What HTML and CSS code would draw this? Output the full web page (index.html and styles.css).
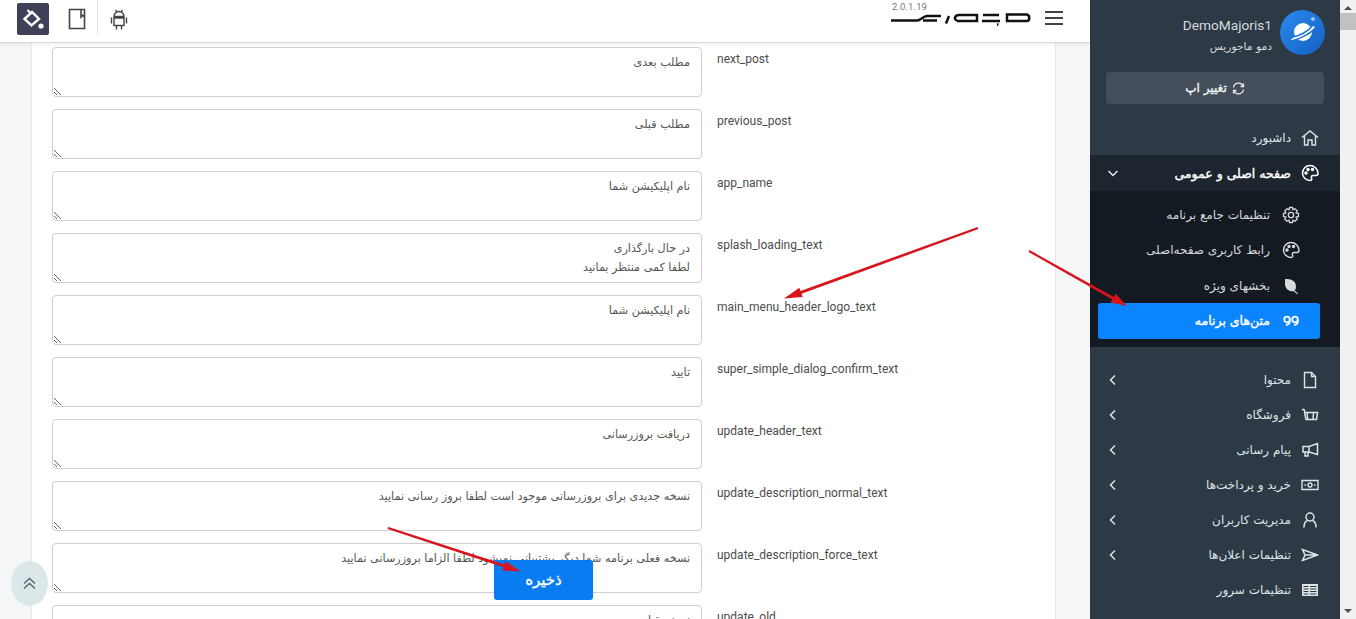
FILE: index.html
```html
<!DOCTYPE html>
<html lang="fa">
<head>
    <meta charset="UTF-8">
    <title>DemoMajoris1</title>
    <link rel="stylesheet" href="styles.css">
</head>
<body>
<div class="shell">
    <div class="main">
        <div class="topbar">
            <div class="tools">
                <a class="tool-paint" href="#">
                    <svg width="26" height="26" viewBox="0 0 26 26" fill="none" stroke="#fff"><path d="M4.500 13 12 6l7 7-7.500 6.500z" stroke-width="2.400"/><path d="M7.500 4 11 7.500" stroke-width="2.200"/><circle cx="21" cy="20" r="2.600" fill="#fff" stroke="none"/></svg>
                </a>
                <a class="tool-book" href="#">
                    <svg width="18" height="22" viewBox="0 0 18 22" fill="none" stroke="#444" stroke-width="1.600"><path d="M1.500 1.500h15v19h-15z"/><path d="M13 1.500v7.500l1.800-1.800 1.700 1.800"/></svg>
                </a>
                <span class="tool-sep"></span>
                <a class="tool-android" href="#">
                    <svg width="18" height="21" viewBox="0 0 18 21" fill="none" stroke="#444" stroke-width="1.400"><path d="M4 7.500a5 5 0 0 1 10 0zM4 9h10v7.500H4z"/><path d="M1.500 8.500v6M16.500 8.500v6M6.500 16.500v4M11.500 16.500v4M5.500 1l1.500 2M12.500 1 11 3"/></svg>
                </a>
            </div>
            <div class="brand">
                <div class="brand-mark">
                    <span class="version">2.0.1.19</span>
                    <svg width="141" height="15" viewBox="0 0 141 15" fill="none" stroke="#111" stroke-width="2.500"><path d="M1 9.500h26c4 0 6-4.500 10-4.500h14M33 9.500h14M56 12.500l3-7.500M67 9.500c-3-.5-3-5.500 2-5.500h18v6H67M93 4h16M92 10h18M107 13.500h1.500M117 3.500h20c3 1 3 6 0 6.500h-20z"/></svg>
                </div>
                <div class="burger"><span></span><span></span><span></span></div>
            </div>
        </div>
        <div class="content">
            <div class="card">
                <div class="row"><textarea dir="rtl">مطلب بعدی</textarea><label>next_post</label></div>
                <div class="row"><textarea dir="rtl">مطلب قبلی</textarea><label>previous_post</label></div>
                <div class="row"><textarea dir="rtl">نام اپلیکیشن شما</textarea><label>app_name</label></div>
                <div class="row"><textarea dir="rtl">در حال بارگذاری
لطفا کمی منتظر بمانید</textarea><label>splash_loading_text</label></div>
                <div class="row"><textarea dir="rtl">نام اپلیکیشن شما</textarea><label>main_menu_header_logo_text</label></div>
                <div class="row"><textarea dir="rtl">تایید</textarea><label>super_simple_dialog_confirm_text</label></div>
                <div class="row"><textarea dir="rtl">دریافت بروزرسانی</textarea><label>update_header_text</label></div>
                <div class="row"><textarea dir="rtl">نسخه جدیدی برای بروزرسانی موجود است لطفا بروز رسانی نمایید</textarea><label>update_description_normal_text</label></div>
                <div class="row"><textarea dir="rtl">نسخه فعلی برنامه شما دیگر پشتیبانی نمیشود لطفا الزاما بروزرسانی نمایید</textarea><label>update_description_force_text</label></div>
                <div class="row"><textarea dir="rtl">نسخه قبلی</textarea><label>update_old</label></div>
            </div>
        </div>
    </div>

    <div class="sidebar" dir="rtl">
        <div class="account">
            <div class="avatar">
                <svg width="45" height="45" viewBox="0 0 45 45"><circle cx="23" cy="22" r="9" fill="#fff"/><path d="M8 31c8 0 23-7 28-14l-3-2c-5 7-14 11-20 12z" fill="#fff" stroke="#1c74d8" stroke-width="1.500"/><circle cx="33" cy="9" r="2" fill="#9fc8f5"/></svg>
            </div>
            <div class="account-text">
                <div class="account-name">DemoMajoris1</div>
                <div class="account-sub">دمو ماجوریس</div>
            </div>
        </div>
        <a class="switch-app" href="#">
            <svg width="13" height="13" viewBox="0 0 13 13" fill="none" stroke="#e5e7ea" stroke-width="1.300"><path d="M1.500 5.500A5 5 0 0 1 11 4M11.500 7.500A5 5 0 0 1 2 9"/><path d="M11.500 1.500V4.500H8.500M1.500 11.500V8.500H4.500"/></svg>
            تغییر اپ
        </a>
        <nav class="menu">
            <a class="item" href="#">
                <svg class="ico" viewBox="0 0 18 18" fill="none" stroke="#dfe3e6" stroke-width="1.400"><path d="M1 8.500 9 2l8 6.500M3.500 7v9h3.500v-5h4v5h3.500V7"/></svg>
                <span>داشبورد</span>
            </a>
            <a class="item item-open" href="#">
                <svg class="ico" viewBox="0 0 18 18" fill="none" stroke="#fff" stroke-width="1.500"><path d="M9 1.500a7.500 7.500 0 0 0 0 15c2 0 2-1.500 1.500-2.500s0-2.500 1.500-2.500h3c1.500 0 2-1 2-2.500 0-4-4-7.500-8-7.500z"/><circle cx="5" cy="9" r="1" fill="#fff"/><circle cx="7" cy="5.500" r="1" fill="#fff"/><circle cx="11.500" cy="5.500" r="1" fill="#fff"/></svg>
                <span>صفحه اصلی و عمومی</span>
                <svg class="chev" viewBox="0 0 12 12" fill="none" stroke="#e5e7ea" stroke-width="1.500"><path d="M1.500 4 6 8.500 10.500 4"/></svg>
            </a>
            <div class="submenu">
                <a class="subitem" href="#">
                    <svg class="ico" viewBox="0 0 18 18" fill="none" stroke="#d5d9dc" stroke-width="1.300"><path d="M7.500 1.500h3l.5 2.200 2-1 2.200 2.200-1.100 2 2.400.6v3l-2.400.6 1.100 2-2.200 2.200-2-1.100-.5 2.300h-3l-.5-2.300-2 1.100-2.200-2.200 1.100-2-2.400-.6v-3l2.400-.6-1.100-2L5 2.700l2 1z"/><circle cx="9" cy="9" r="2.700"/></svg>
                    <span>تنظیمات جامع برنامه</span>
                </a>
                <a class="subitem" href="#">
                    <svg class="ico" viewBox="0 0 18 18" fill="none" stroke="#d5d9dc" stroke-width="1.400"><path d="M9 1.500a7.500 7.500 0 0 0 0 15c2 0 2-1.500 1.500-2.500s0-2.500 1.500-2.500h3c1.500 0 2-1 2-2.500 0-4-4-7.500-8-7.500z"/><circle cx="5" cy="9" r="1" fill="#d5d9dc"/><circle cx="7" cy="5.500" r="1" fill="#d5d9dc"/><circle cx="11.500" cy="5.500" r="1" fill="#d5d9dc"/></svg>
                    <span>رابط کاربری صفحه‌اصلی</span>
                </a>
                <a class="subitem" href="#">
                    <svg class="ico" viewBox="0 0 18 18" fill="#d5d9dc"><path d="M3 2c6 0 11 1 11 8 0 2-1 3-2 4-4 1-8-1-9-6zM12 13l4 3.500-.8.800-4-3.500z"/></svg>
                    <span>بخشهای ویژه</span>
                </a>
                <a class="subitem subitem-on" href="#">
                    <svg class="ico" viewBox="0 0 18 18" fill="none" stroke="#fff" stroke-width="1.800"><circle cx="5" cy="7.500" r="2.800"/><path d="M7.800 7.500v2c0 2-1 3-3.800 3.500"/><circle cx="13" cy="7.500" r="2.800"/><path d="M15.800 7.500v2c0 2-1 3-3.800 3.500"/></svg>
                    <span>متن‌های برنامه</span>
                </a>
            </div>
            <a class="item" href="#">
                <svg class="ico" viewBox="0 0 18 18" fill="none" stroke="#dfe3e6" stroke-width="1.400"><path d="M3.500 1.500h7l4 4v11h-11zM10.500 1.500v4h4"/></svg>
                <span>محتوا</span>
                <svg class="chev" viewBox="0 0 12 12" fill="none" stroke="#dfe3e6" stroke-width="1.500"><path d="M8 1.500 3.500 6 8 10.500"/></svg>
            </a>
            <a class="item" href="#">
                <svg class="ico" viewBox="0 0 18 18" fill="none" stroke="#dfe3e6" stroke-width="1.500"><path d="M1 3.500h2l1 3h12.500l-1 7H5L3.500 6.500"/><path d="M6 6.500l.7 7M12.500 6.500l-.5 7"/></svg>
                <span>فروشگاه</span>
                <svg class="chev" viewBox="0 0 12 12" fill="none" stroke="#dfe3e6" stroke-width="1.500"><path d="M8 1.500 3.500 6 8 10.500"/></svg>
            </a>
            <a class="item" href="#">
                <svg class="ico" viewBox="0 0 18 18" fill="none" stroke="#dfe3e6" stroke-width="1.500"><path d="M16.500 2.500v11L8 11H2V5.500h6zM8 5.500V11M4 11v4h3v-4"/></svg>
                <span>پیام رسانی</span>
                <svg class="chev" viewBox="0 0 12 12" fill="none" stroke="#dfe3e6" stroke-width="1.500"><path d="M8 1.500 3.500 6 8 10.500"/></svg>
            </a>
            <a class="item" href="#">
                <svg class="ico" viewBox="0 0 18 18" fill="none" stroke="#dfe3e6" stroke-width="1.400"><path d="M1 4.500h16v9H1z"/><circle cx="9" cy="9" r="2"/><path d="M3.500 9h1.500M13 9h1.500"/></svg>
                <span>خرید و پرداخت‌ها</span>
                <svg class="chev" viewBox="0 0 12 12" fill="none" stroke="#dfe3e6" stroke-width="1.500"><path d="M8 1.500 3.500 6 8 10.500"/></svg>
            </a>
            <a class="item" href="#">
                <svg class="ico" viewBox="0 0 18 18" fill="none" stroke="#dfe3e6" stroke-width="1.500"><circle cx="9" cy="6" r="4"/><path d="M3 16.500c0-4 2-6.500 3.500-7M15 16.500c0-4-2-6.500-3.500-7"/></svg>
                <span>مدیریت کاربران</span>
                <svg class="chev" viewBox="0 0 12 12" fill="none" stroke="#dfe3e6" stroke-width="1.500"><path d="M8 1.500 3.500 6 8 10.500"/></svg>
            </a>
            <a class="item" href="#">
                <svg class="ico" viewBox="0 0 18 18" fill="none" stroke="#dfe3e6" stroke-width="1.500"><path d="M16.500 9 1.500 3.500 4 9l-2.500 5.500zM4 9h12.500"/></svg>
                <span>تنظیمات اعلان‌ها</span>
                <svg class="chev" viewBox="0 0 12 12" fill="none" stroke="#dfe3e6" stroke-width="1.500"><path d="M8 1.500 3.500 6 8 10.500"/></svg>
            </a>
            <a class="item" href="#">
                <svg class="ico" viewBox="0 0 18 18" fill="#dfe3e6"><path d="M1 3h16v12H1zM2.500 5v1h5V5zm0 2.500v1h5v-1zm0 2.500v1h5v-1zm0 2.500v1h5v-1zM9 5v1h6.500V5zm0 2.500v1h6.500v-1zm0 2.500v1h6.500v-1zm0 2.500v1h6.500v-1z" fill-rule="evenodd"/></svg>
                <span>تنظیمات سرور</span>
            </a>
        </nav>
    </div>

    <div class="scrollbar">
        <span class="sb-up"></span>
        <span class="sb-thumb"></span>
        <span class="sb-track"></span>
        <span class="sb-down"></span>
    </div>

    <a class="save-btn" href="#">ذخیره</a>
    <a class="to-top" href="#">
        <svg width="15" height="13" viewBox="0 0 15 13" fill="none" stroke="#5a6670" stroke-width="1.500"><path d="M2 6.500 7.500 1.500l5.500 5M2 11.500 7.500 6.500l5.500 5"/></svg>
    </a>

    <!-- red arrows drawn on top of the screenshot -->
    <svg class="marks" width="1356" height="619" viewBox="0 0 1356 619">
        <g fill="#d8141c" stroke="none">
            <path d="M977.600 226.900 978.400 229.100 801.500 293.800 802.700 297.100 784 298.500 799.300 287.700 800.500 291z"/>
            <path d="M1029.500 250.100 1028.500 251.900 1112.300 299.500 1110.500 302.600 1127 306 1115.500 293.800 1113.700 296.900z"/>
            <path d="M388.400 526.900 387.600 529.100 503.400 567.300 502.400 570.600 521 571.500 505.400 561.200 504.400 564.500z"/>
        </g>
    </svg>
</div>
</body>
</html>
```

FILE: styles.css
```css
*{
    margin: 0;
    padding: 0;
    box-sizing: border-box;
}
html,body{
    height: 100%;
    overflow: hidden;
}
body{
    font-family: "Roboto", "DejaVu Sans", sans-serif;
    background: #f5f6f8;
}
a{
    text-decoration: none;
    color: inherit;
}
.shell{
    position: relative;
    display: flex;
    width: 1356px;
    height: 619px;
    overflow: hidden;
}
.main{
    width: 1090px;
    display: flex;
    flex-direction: column;
}
.topbar{
    height: 43px;
    flex: none;
    background: #fff;
    border-bottom: 1px solid #d8d8d8;
    box-shadow: 0 1px 4px rgba(0,0,0,.08);
    display: flex;
    justify-content: space-between;
    position: relative;
    z-index: 2;
    padding: 3px 27px 0 17px;
}
.tools{
    display: flex;
    align-items: flex-start;
}
.tool-paint{
    width: 32px;
    height: 32px;
    background: #3f4158;
    border-radius: 2px;
    display: flex;
    align-items: center;
    justify-content: center;
}
.tool-book{
    margin: 5px 0 0 19px;
    display: block;
    height: 22px;
}
.tool-sep{
    width: 1px;
    height: 35px;
    background: #e2e2e2;
    margin: -3px 12px 0 11px;
}
.tool-android{
    margin-top: 6px;
    display: block;
    height: 21px;
}
.brand{
    display: flex;
    align-items: flex-start;
}
.brand-mark{
    display: flex;
    flex-direction: column;
    width: 141px;
}
.version{
    font-size: 9.500px;
    line-height: 10px;
    color: #777;
    padding-left: 2px;
    margin-top: -1px;
    letter-spacing: .1px;
}
.brand-mark svg{
    margin-top: -1px;
}
.burger{
    width: 18px;
    margin: 8px 0 0 14px;
    display: flex;
    flex-direction: column;
    gap: 4px;
}
.burger span{
    height: 2px;
    background: #444;
}
.content{
    flex: 1;
    min-height: 0;
    overflow: hidden;
    padding: 0 34px 0 31px;
}
.card{
    background: #fff;
    border-left: 1px solid #e6e8eb;
    border-right: 1px solid #e6e8eb;
    padding: 4px 0 0 20px;
    height: 100%;
    overflow: hidden;
}
.row{
    display: flex;
    gap: 15px;
    margin-bottom: 12px;
}
.row textarea{
    width: 650px;
    height: 50px;
    flex: none;
    border: 1px solid #cfcfcf;
    border-radius: 4px;
    padding: 5px 11px;
    font-family: "DejaVu Sans", sans-serif;
    font-size: 11.200px;
    line-height: 19px;
    color: #555;
    background: #fff;
    overflow: hidden;
    outline: none;
}
.row label{
    font-size: 12px;
    line-height: 14px;
    color: #4c4c4c;
    padding-top: 5px;
}
.sidebar{
    width: 250px;
    flex: none;
    background: #2d3a46;
    color: #dfe3e6;
    font-family: "DejaVu Sans", sans-serif;
}
.account{
    display: flex;
    gap: 8px;
    padding: 10px 15px 0;
    height: 72px;
    align-items: flex-start;
}
.avatar{
    width: 45px;
    height: 45px;
    border-radius: 50%;
    background: linear-gradient(135deg,#2a8af0,#1460c0);
    flex: none;
    overflow: hidden;
}
.account-name{
    font-family: "Roboto", sans-serif;
    font-size: 13.700px;
    line-height: 18px;
    margin-top: 6px;
    direction: ltr;
    text-align: right;
    color: #d5d9dc;
}
.account-sub{
    font-size: 10.700px;
    line-height: 14px;
    margin-top: 6px;
    color: #d5d9dc;
}
.switch-app{
    margin: 0 16px;
    height: 32px;
    background: #434e5a;
    border-radius: 4px;
    display: flex;
    align-items: center;
    justify-content: center;
    gap: 5px;
    font-size: 12px;
    -webkit-text-stroke: .4px #eef0f2;
    color: #eef0f2;
}
.menu{
    display: block;
    margin-top: 16px;
}
.item{
    height: 35px;
    display: flex;
    align-items: center;
    gap: 10px;
    padding: 0 21px 0 17px;
    font-size: 12px;
    color: #dfe3e6;
}
.ico{
    width: 18px;
    height: 18px;
    flex: none;
}
.chev{
    width: 12px;
    height: 12px;
    margin-inline-start: auto;
}
.item-open{
    height: 36px;
    background: #1d252e;
    color: #fff;
    font-size: 12.500px;
    -webkit-text-stroke: .4px #fff;
}
.item-open svg{
    -webkit-text-stroke: 0;
}
.submenu{
    background: #141a22;
    padding: 6px 20px 8px 8px;
    height: 156px;
    margin-bottom: 15px;
}
.subitem{
    height: 35.500px;
    display: flex;
    align-items: center;
    gap: 12px;
    padding-right: 20px;
    font-size: 12px;
    color: #d5d9dc;
}
.subitem-on{
    height: 36px;
    margin-top: -1px;
    background: #0a84ff;
    border-radius: 3px;
    color: #fff;
    font-size: 12.500px;
    -webkit-text-stroke: .4px #fff;
}
.scrollbar{
    width: 16px;
    flex: none;
    background: #f1f1f1;
    display: flex;
    flex-direction: column;
    align-items: center;
}
.sb-up,.sb-down{
    width: 0;
    height: 0;
    border-left: 4px solid transparent;
    border-right: 4px solid transparent;
    flex: none;
}
.sb-up{
    border-bottom: 4px solid #505050;
    margin: 6px 0 3px;
}
.sb-thumb{
    width: 100%;
    height: 17px;
    background: #c1c1c1;
}
.sb-track{
    flex: 1;
}
.sb-down{
    border-top: 4px solid #505050;
    margin: 0 0 6px;
}
.save-btn{
    position: absolute;
    left: 494px;
    top: 560px;
    width: 99px;
    height: 40px;
    background: #0a7cf2;
    border-radius: 3px;
    color: #fff;
    font-family: "DejaVu Sans", sans-serif;
    font-size: 15px;
    -webkit-text-stroke: .4px #fff;
    display: flex;
    align-items: center;
    justify-content: center;
}
.to-top{
    position: absolute;
    left: 11px;
    top: 561px;
    width: 37px;
    height: 45px;
    border-radius: 50%;
    background: #dce7ea;
    display: flex;
    align-items: center;
    justify-content: center;
}
.marks{
    position: absolute;
    left: 0;
    top: 0;
    pointer-events: none;
}
```
